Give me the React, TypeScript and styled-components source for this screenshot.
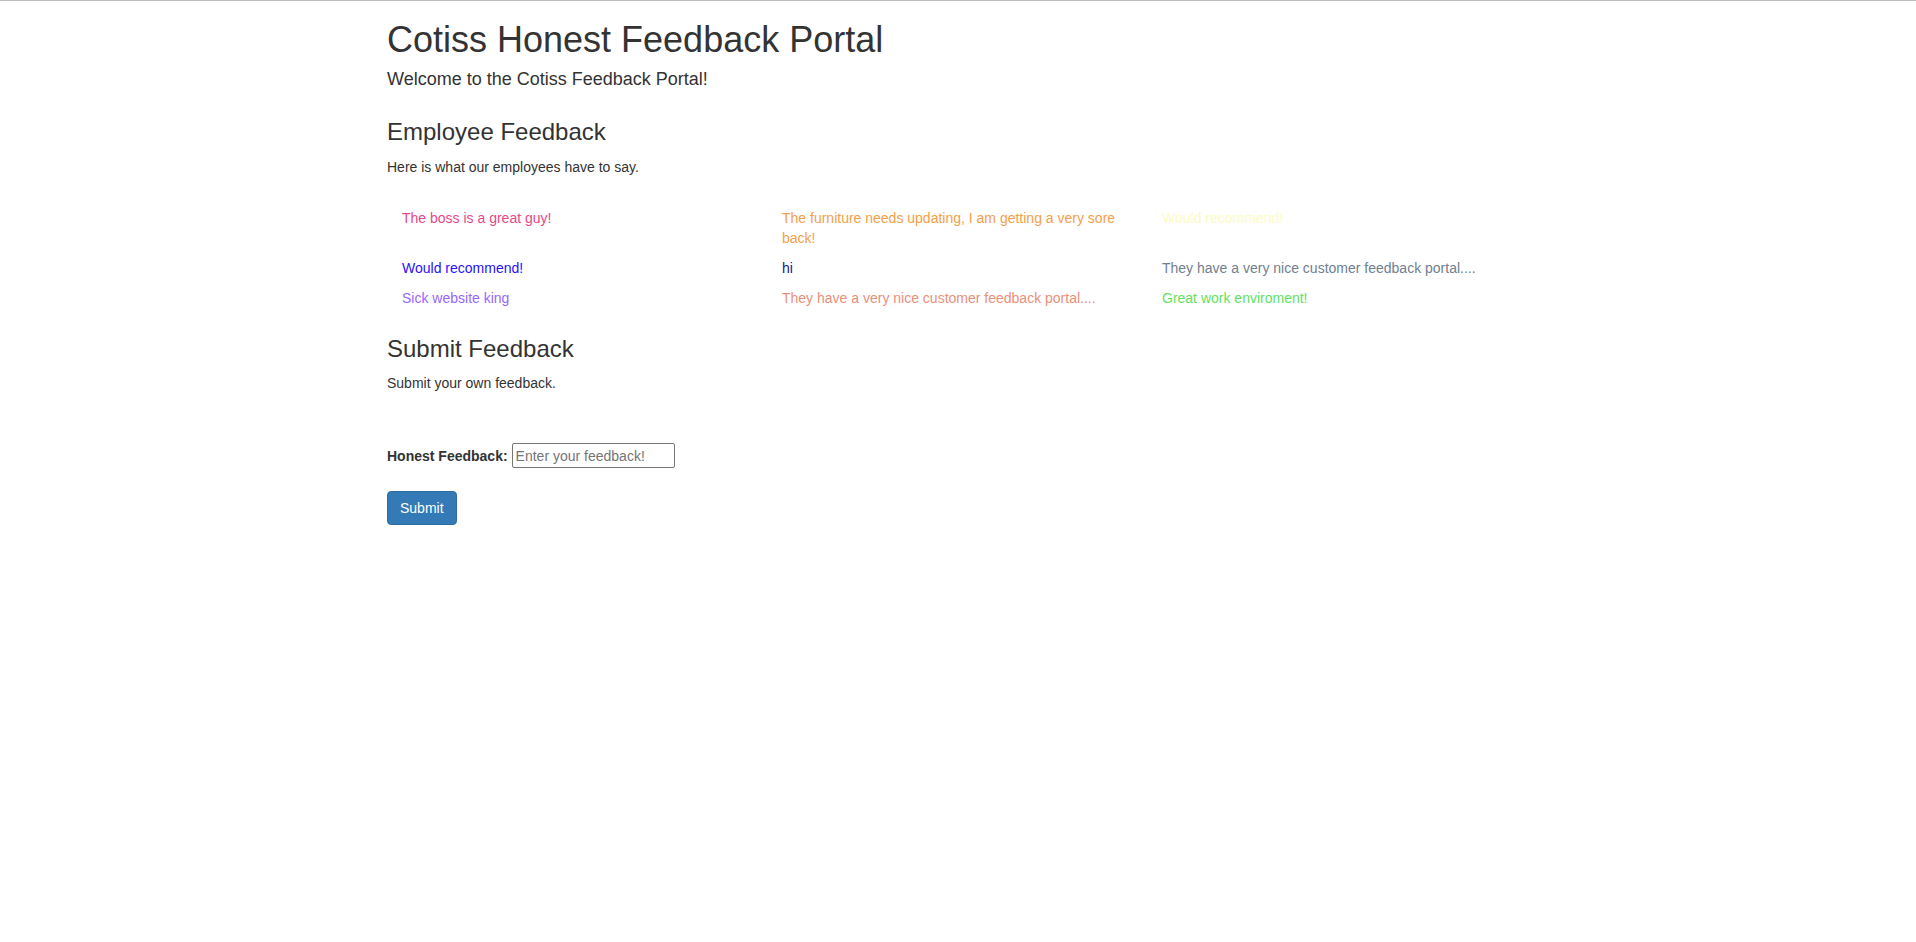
import React from "react";
import styled, { createGlobalStyle } from "styled-components";

const GlobalStyle = createGlobalStyle`
  html, body {
    margin: 0;
    padding: 0;
    background: #ffffff;
  }
  body {
    border-top: 1px solid #bdbdbd;
    font-family: "Liberation Sans", Arial, Helvetica, sans-serif;
    font-size: 14px;
    line-height: 1.42857143;
    color: #333333;
  }
  * {
    box-sizing: border-box;
  }
`;

const Container = styled.main`
  width: 1142px;
  margin: 0 auto;
`;

const Title = styled.h1`
  font-size: 36px;
  font-weight: 500;
  line-height: 1.1;
  margin: 19px 0 10px;
  color: #333333;
`;

const Welcome = styled.h4`
  font-size: 18px;
  font-weight: 500;
  line-height: 1.1;
  margin: 0;
  color: #333333;
`;

const SectionTitle = styled.h3<{ $top: number }>`
  font-size: 24px;
  font-weight: 500;
  line-height: 1.1;
  margin: ${(p) => p.$top}px 0 11px;
  color: #333333;
`;

const Lead = styled.p`
  margin: 0;
`;

const FeedbackGrid = styled.div`
  display: grid;
  grid-template-columns: repeat(3, 380px);
  row-gap: 10px;
  margin-top: 31px;
`;

const FeedbackItem = styled.p<{ $color: string }>`
  margin: 0;
  padding: 0 13px 0 15px;
  color: ${(p) => p.$color};
`;

const FormRow = styled.form`
  display: flex;
  align-items: center;
  gap: 4px;
  margin-top: 50px;
`;

const Label = styled.label`
  font-weight: 700;
  color: #333333;
`;

const TextInput = styled.input`
  width: 163px;
  height: 25px;
  padding: 1px 3px;
  border: 1px solid #767676;
  border-radius: 2px;
  font-family: inherit;
  font-size: 14px;
  color: #333333;
  background: #ffffff;
  &::placeholder {
    color: #757575;
  }
`;

const SubmitButton = styled.button`
  display: block;
  margin-top: 23px;
  height: 34px;
  padding: 6px 12px;
  font-family: inherit;
  font-size: 14px;
  line-height: 20px;
  color: #ffffff;
  background: #337ab7;
  border: 1px solid #2e6da4;
  border-radius: 4px;
  cursor: pointer;
`;

const feedback: { text: string; color: string }[] = [
  { text: "The boss is a great guy!", color: "#e8478a" },
  { text: "The furniture needs updating, I am getting a very sore back!", color: "#f4a04a" },
  { text: "Would recommend!", color: "#fcfcc4" },
  { text: "Would recommend!", color: "#2a10ff" },
  { text: "hi", color: "#14208c" },
  { text: "They have a very nice customer feedback portal....", color: "#708090" },
  { text: "Sick website king", color: "#9866ff" },
  { text: "They have a very nice customer feedback portal....", color: "#e9907a" },
  { text: "Great work enviroment!", color: "#62e262" },
];

export default function App() {
  return (
    <>
      <GlobalStyle />
      <Container>
        <Title>Cotiss Honest Feedback Portal</Title>
        <Welcome>Welcome to the Cotiss Feedback Portal!</Welcome>

        <SectionTitle $top={30}>Employee Feedback</SectionTitle>
        <Lead>Here is what our employees have to say.</Lead>
        <FeedbackGrid>
          {feedback.map((f, i) => (
            <FeedbackItem key={i} $color={f.color}>
              {f.text}
            </FeedbackItem>
          ))}
        </FeedbackGrid>

        <SectionTitle $top={28}>Submit Feedback</SectionTitle>
        <Lead>Submit your own feedback.</Lead>
        <FormRow onSubmit={(e) => e.preventDefault()}>
          <Label htmlFor="feedback">Honest Feedback:</Label>
          <TextInput id="feedback" type="text" placeholder="Enter your feedback!" />
        </FormRow>
        <SubmitButton type="button">Submit</SubmitButton>
      </Container>
    </>
  );
}
